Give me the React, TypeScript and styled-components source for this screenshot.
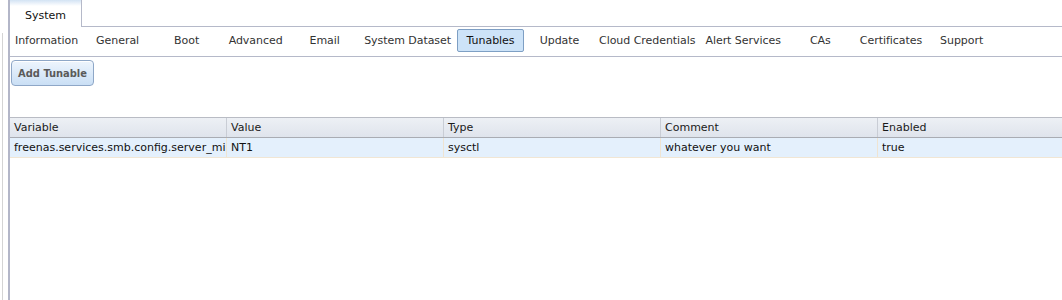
import styled, { createGlobalStyle } from 'styled-components';

const subTabs = [
    'Information',
    'General',
    'Boot',
    'Advanced',
    'Email',
    'System Dataset',
    'Tunables',
    'Update',
    'Cloud Credentials',
    'Alert Services',
    'CAs',
    'Certificates',
    'Support',
];

const columns = ['Variable', 'Value', 'Type', 'Comment', 'Enabled'];

const tunables = [
    {
        variable: 'freenas.services.smb.config.server_min_protocol',
        value: 'NT1',
        type: 'sysctl',
        comment: 'whatever you want',
        enabled: 'true',
    },
];

const App = () => {
    return (
        <>
            <GlobalStyle />
            <Page>
                <Gutter />
                <Main>
                    <TopTabs>
                        <TopTab>System</TopTab>
                        <TopFiller />
                    </TopTabs>
                    <SubTabBar>
                        {subTabs.map((name) => (
                            <SubTab key={name} $active={name === 'Tunables'}>
                                {name}
                            </SubTab>
                        ))}
                    </SubTabBar>
                    <Toolbar>
                        <AddButton>Add Tunable</AddButton>
                    </Toolbar>
                    <Grid>
                        <HeaderRow>
                            {columns.map((col) => (
                                <HeaderCell key={col}>{col}</HeaderCell>
                            ))}
                        </HeaderRow>
                        {tunables.map((t) => (
                            <Row key={t.variable}>
                                <Cell>{t.variable}</Cell>
                                <Cell>{t.value}</Cell>
                                <Cell>{t.type}</Cell>
                                <Cell>{t.comment}</Cell>
                                <Cell>{t.enabled}</Cell>
                            </Row>
                        ))}
                    </Grid>
                </Main>
            </Page>
        </>
    );
};

const GlobalStyle = createGlobalStyle`
    html, body {
        margin: 0;
        padding: 0;
        background: #ffffff;
        overflow: hidden;
    }
    body {
        font-family: "DejaVu Sans", Verdana, sans-serif;
        font-size: 11px;
        color: #222;
    }
`;

const Page = styled.div`
    display: flex;
    height: 300px;
`;

const Gutter = styled.div`
    width: 6px;
    margin-left: 2px;
    margin-top: 33px;
    border-left: 1px solid #d4d4d4;
    box-sizing: border-box;
`;

const Main = styled.div`
    flex: 1;
    min-width: 0;
    overflow: hidden;
    border-left: 2px solid #b3b6c8;
`;

const TopTabs = styled.div`
    display: flex;
    height: 27px;
`;

const TopTab = styled.div`
    width: 72px;
    box-sizing: border-box;
    border-right: 1px solid #b5b9c9;
    background: linear-gradient(#d3e3f4 0px, #ffffff 6px, #ffffff 100%);
    color: #111;
    display: flex;
    align-items: center;
    justify-content: center;
    padding-top: 3px;
`;

const TopFiller = styled.div`
    flex: 1;
    border-bottom: 1px solid #b5b9c9;
`;

const SubTabBar = styled.div`
    display: flex;
    gap: 2px;
    padding: 2px 0 4px 1px;
    border-bottom: 1px solid #b5b9c9;
`;

const SubTab = styled.div<{ $active?: boolean }>`
    min-width: 67px;
    height: 23px;
    box-sizing: border-box;
    padding: 0 3px;
    display: flex;
    align-items: center;
    justify-content: center;
    white-space: nowrap;
    letter-spacing: -0.05px;
    border-radius: 2px;
    border: 1px solid ${(p) => (p.$active ? '#7e9fc4' : 'transparent')};
    background: ${(p) => (p.$active ? '#cde3f8' : 'transparent')};
    color: ${(p) => (p.$active ? '#111' : '#333')};
`;

const Toolbar = styled.div`
    box-sizing: border-box;
    padding: 3px 0 0 1px;
    height: 60px;
`;

const AddButton = styled.button`
    width: 83px;
    height: 26px;
    box-sizing: border-box;
    border: 1px solid #8ea7c7;
    border-radius: 4px;
    background: linear-gradient(#eef5fd, #cadff5);
    font-family: "DejaVu Sans Condensed", "DejaVu Sans", sans-serif;
    font-size: 11px;
    font-weight: bold;
    color: #5a5a5a;
    padding: 0;
    box-shadow: inset 0 1px 0 #ffffff;
`;

const Grid = styled.div`
    width: 1085px;
`;

const HeaderRow = styled.div`
    display: grid;
    grid-template-columns: repeat(5, 217px);
    border-top: 1px solid #b9bcc4;
    border-bottom: 1px solid #a9acb3;
    background: linear-gradient(#edf0f5, #dfe4ec);
`;

const HeaderCell = styled.div`
    height: 19px;
    line-height: 19px;
    padding-left: 4px;
    border-right: 1px solid #c9cdd5;
    color: #1a1a1a;
`;

const Row = styled.div`
    display: grid;
    grid-template-columns: repeat(5, 217px);
    background: #e4f0fc;
    border-bottom: 1px solid #f1e6d4;
`;

const Cell = styled.div`
    height: 19px;
    line-height: 19px;
    padding-left: 4px;
    border-right: 1px solid #efe4d2;
    overflow: hidden;
    white-space: nowrap;
    color: #111;
`;

export default App;
